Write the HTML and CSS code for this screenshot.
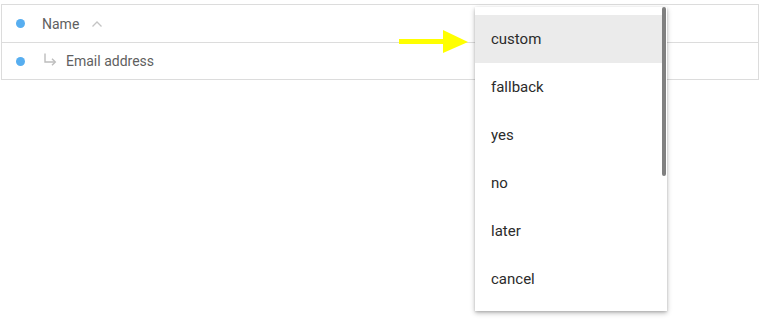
FILE: index.html
```html
<!DOCTYPE html>
<html lang="en">
<head>
    <meta charset="UTF-8">
    <meta name="viewport" content="width=device-width, initial-scale=1.0">
    <title>Field mapping</title>
    <link rel="stylesheet" href="styles.css">
</head>
<body>
    <div class="table">
        <div class="row">
            <span class="dot"></span>
            <span class="label">Name</span>
            <svg class="chevron" width="12" height="8" viewBox="0 0 12 8">
                <path d="M1.5 6.5 L6 2 L10.5 6.5" fill="none" stroke="#c4c4c4" stroke-width="1.3"/>
            </svg>
        </div>
        <div class="row">
            <span class="dot"></span>
            <svg class="sub-arrow" width="14" height="14" viewBox="0 0 14 14">
                <path d="M2 0.5 V9 H12" fill="none" stroke="#bdbdbd" stroke-width="1.4"/>
                <path d="M9 5.8 L12.3 9 L9 12.2" fill="none" stroke="#bdbdbd" stroke-width="1.4"/>
            </svg>
            <span class="label">Email address</span>
        </div>
    </div>

    <svg class="pointer" width="70" height="24" viewBox="0 0 70 24">
        <rect x="0" y="9" width="45" height="5" fill="#ffff00"/>
        <polygon points="44,0 69,12 44,23" fill="#ffff00"/>
    </svg>

    <div class="menu">
        <ul class="options">
            <li class="option selected">custom</li>
            <li class="option">fallback</li>
            <li class="option">yes</li>
            <li class="option">no</li>
            <li class="option">later</li>
            <li class="option">cancel</li>
        </ul>
        <div class="scrollbar"></div>
    </div>
</body>
</html>
```

FILE: styles.css
```css
body {
    margin: 0;
    padding: 4px 3px 0 1px;
    font-family: Roboto, "Liberation Sans", sans-serif;
    background: #fff;
}
.table {
    border: 1px solid #dcdcdc;
}
.row {
    display: flex;
    align-items: center;
    height: 37px;
    padding-left: 14px;
    color: #5f5f5f;
    font-size: 14px;
}
.row + .row {
    border-top: 1px solid #dcdcdc;
    height: 36px;
}
.dot {
    width: 9px;
    height: 9px;
    border-radius: 50%;
    background: #57aef0;
    margin-right: 17px;
}
.chevron {
    margin-left: 12px;
}
.sub-arrow {
    margin: 0 9px 2px 1px;
}
.pointer {
    position: absolute;
    left: 399px;
    top: 30px;
}
.menu {
    position: absolute;
    left: 475px;
    top: 7px;
    width: 192px;
    height: 304px;
    background: #fff;
    box-shadow: 0 2px 5px rgba(0, 0, 0, 0.28), 0 1px 2px rgba(0, 0, 0, 0.12);
    overflow: hidden;
}
.options {
    list-style: none;
    margin: 0;
    padding: 8px 0 0 0;
}
.option {
    height: 48px;
    line-height: 48px;
    padding-left: 16px;
    font-size: 15px;
    color: #2b2b2b;
}
.option.selected {
    background: #ebebeb;
    margin-right: 5px;
}
.scrollbar {
    position: absolute;
    right: 1px;
    top: 0;
    width: 4px;
    height: 169px;
    border-radius: 2px;
    background: #808080;
}
```
